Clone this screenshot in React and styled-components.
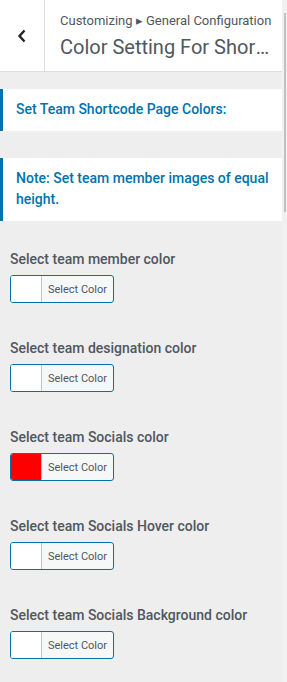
import React from 'react';
import styled, { createGlobalStyle } from 'styled-components';

const GlobalStyle = createGlobalStyle`
  html, body {
    margin: 0;
    padding: 0;
    background: #eeeeee;
    font-family: Roboto, "Noto Sans", "Liberation Sans", sans-serif;
    -webkit-font-smoothing: antialiased;
  }
`;

const Frame = styled.div`
  display: flex;
  width: 287px;
  height: 682px;
  overflow: hidden;
`;

const Panel = styled.div`
  flex: 0 0 282px;
  width: 282px;
  min-width: 0;
  overflow: hidden;
  background: #eeeeee;
`;

const ScrollTrack = styled.div`
  flex: 0 0 5px;
  background: #f1f1f1;
  padding: 13px 1px 0 2px;
  box-sizing: border-box;
`;

const ScrollThumb = styled.div`
  height: 199px;
  background: #c1c1c1;
`;

const Header = styled.div`
  display: flex;
  height: 71px;
  background: #fff;
  border-bottom: 1px solid #dddddd;
`;

const BackButton = styled.button`
  flex: 0 0 45px;
  display: flex;
  align-items: center;
  justify-content: center;
  padding: 0;
  border: 0;
  border-right: 1px solid #dddddd;
  background: #fff;
  color: #1d2327;
  cursor: pointer;
`;

const TitleBox = styled.div`
  flex: 1;
  min-width: 0;
  padding: 12px 12px 0 15px;
`;

const Crumb = styled.div`
  font-size: 13px;
  line-height: 18px;
  color: #50575e;
  white-space: nowrap;
`;

const Title = styled.h3`
  margin: 4px 0 0;
  font-size: 20px;
  font-weight: 400;
  line-height: 26px;
  color: #50575e;
  white-space: nowrap;
  overflow: hidden;
  text-overflow: ellipsis;
`;

const Body = styled.div`
  padding-top: 17px;
`;

const Notice = styled.div`
  background: #fff;
  border-left: 3px solid #0073aa;
  padding: 10px 12px 11px 13px;
  margin-bottom: ${(p) => p.$gap || 0}px;
  color: #0073aa;
  font-size: 14px;
  font-weight: 500;
  line-height: 21px;
`;

const Controls = styled.div`
  padding: 28px 10px 0;
`;

const Control = styled.div`
  margin-bottom: 35px;
`;

const Label = styled.span`
  display: block;
  margin-bottom: 5px;
  font-size: 14px;
  font-weight: 500;
  line-height: 21px;
  color: #50575e;
`;

const ColorButton = styled.button`
  display: flex;
  width: 104px;
  height: 28px;
  padding: 0;
  border: 1px solid #0073aa;
  border-radius: 3px;
  overflow: hidden;
  background: #f6f7f7;
  cursor: pointer;
`;

const Swatch = styled.span`
  flex: 0 0 30px;
  background: ${(p) => p.$color};
  border-right: 1px solid #c3c4c7;
`;

const ButtonText = styled.span`
  flex: 1;
  display: flex;
  align-items: center;
  justify-content: center;
  font-family: Roboto, "Liberation Sans", sans-serif;
  font-size: 11px;
  color: #50575e;
`;

const controls = [
  { label: 'Select team member color', color: '#ffffff' },
  { label: 'Select team designation color', color: '#ffffff' },
  { label: 'Select team Socials color', color: '#ff0000' },
  { label: 'Select team Socials Hover color', color: '#ffffff' },
  { label: 'Select team Socials Background color', color: '#ffffff' },
];

export default function App() {
  return (
    <>
      <GlobalStyle />
      <Frame>
        <Panel>
          <Header>
            <BackButton aria-label="Back">
              <svg width="10" height="14" viewBox="0 0 10 14">
                <path d="M7.5 1.5 L2.5 7 L7.5 12.5" fill="none" stroke="currentColor" strokeWidth="2.4" />
              </svg>
            </BackButton>
            <TitleBox>
              <Crumb>Customizing ▸ General Configuration</Crumb>
              <Title>Color Setting For Shortcode Page</Title>
            </TitleBox>
          </Header>
          <Body>
            <Notice $gap={27}>Set Team Shortcode Page Colors:</Notice>
            <Notice>Note: Set team member images of equal height.</Notice>
            <Controls>
              {controls.map((c) => (
                <Control key={c.label}>
                  <Label>{c.label}</Label>
                  <ColorButton>
                    <Swatch $color={c.color} />
                    <ButtonText>Select Color</ButtonText>
                  </ColorButton>
                </Control>
              ))}
            </Controls>
          </Body>
        </Panel>
        <ScrollTrack>
          <ScrollThumb />
        </ScrollTrack>
      </Frame>
    </>
  );
}
